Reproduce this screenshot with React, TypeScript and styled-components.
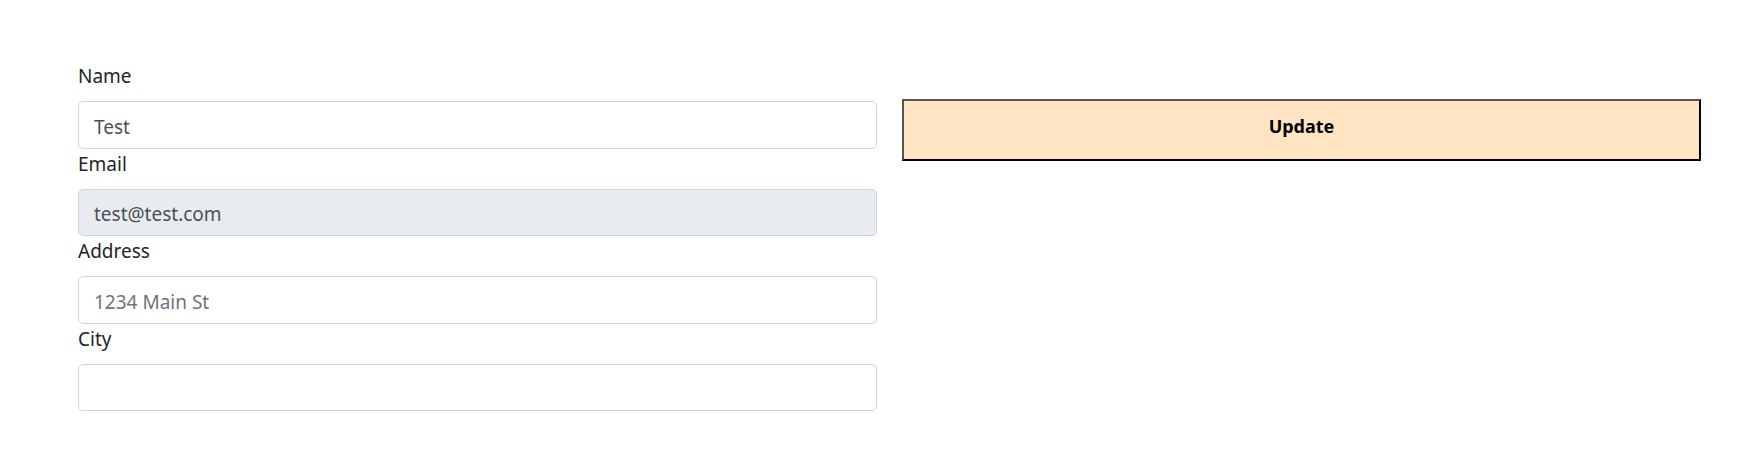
import React from "react";
import styled, { createGlobalStyle } from "styled-components";

const GlobalStyle = createGlobalStyle`
  html, body { margin: 0; padding: 0; background: #ffffff; }
  body {
    font-family: "Noto Sans", "Open Sans", "Liberation Sans", sans-serif;
    color: #212529;
  }
  * { box-sizing: border-box; }
`;

const Page = styled.div`
  width: 1760px;
  height: 452px;
  padding: 61px 59px 0 78px;
`;

const Row = styled.div`
  display: grid;
  grid-template-columns: 1fr 1fr;
  column-gap: 25px;
  align-items: start;
`;

const Form = styled.form`
  display: flex;
  flex-direction: column;
`;

const Group = styled.div`
  display: flex;
  flex-direction: column;
`;

const Label = styled.label`
  font-size: 19px;
  line-height: 31px;
  margin-bottom: 9px;
  color: #212529;
`;

const Input = styled.input`
  display: block;
  width: 100%;
  height: 47.5px;
  padding: 9px 15px 5px;
  font-family: inherit;
  font-size: 19px;
  line-height: 30px;
  color: #495057;
  background: ${(p) => (p.disabled ? "#e9ecef" : "#ffffff")};
  border: 1px solid #ced4da;
  border-radius: 5px;
  outline: none;
  &::placeholder { color: #6c757d; opacity: 1; }
  &:disabled { color: #495057; }
`;

const UpdateButton = styled.button`
  margin-top: 38px;
  width: 100%;
  height: 62px;
  padding: 0 0 9px;
  background: #ffe4c4;
  border: 2px solid;
  border-color: #555555 #000000 #000000 #555555;
  font-family: inherit;
  font-size: 18px;
  font-weight: 700;
  color: #000000;
  cursor: pointer;
`;

const fields = [
  { label: "Name", value: "Test" },
  { label: "Email", value: "test@test.com", disabled: true },
  { label: "Address", placeholder: "1234 Main St" },
  { label: "City" },
];

export default function App() {
  return (
    <>
      <GlobalStyle />
      <Page>
        <Row>
          <Form onSubmit={(e) => e.preventDefault()}>
            {fields.map((f) => (
              <Group key={f.label}>
                <Label>{f.label}</Label>
                <Input
                  defaultValue={f.value}
                  placeholder={f.placeholder}
                  disabled={f.disabled}
                />
              </Group>
            ))}
          </Form>
          <UpdateButton type="button">Update</UpdateButton>
        </Row>
      </Page>
    </>
  );
}
